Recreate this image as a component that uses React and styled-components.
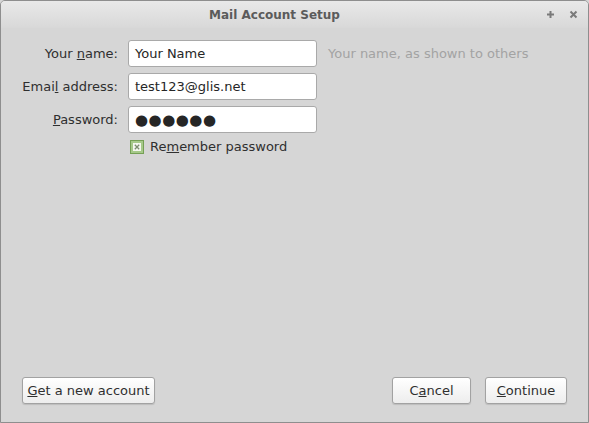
import React from 'react'
import styled, { createGlobalStyle } from 'styled-components'

const GlobalStyle = createGlobalStyle`
    html, body {
        margin: 0;
        padding: 0;
        background: #d6d6d6;
    }
    body {
        font-family: "DejaVu Sans", "Liberation Sans", sans-serif;
        font-size: 13px;
        color: #2f2f2f;
    }
`

const App = () => {
    return (
        <>
            <GlobalStyle />
            <Window>
                <TitleBar>
                    <Title>Mail Account Setup</Title>
                    <TitleButtons>
                        <svg width="9" height="9" viewBox="0 0 9 9">
                            <path d="M4.5 1v7M1 4.5h7" stroke="#7a7a7a" strokeWidth="2" />
                        </svg>
                        <svg width="9" height="9" viewBox="0 0 9 9">
                            <path d="M1.5 1.5l6 6M7.5 1.5l-6 6" stroke="#7a7a7a" strokeWidth="2" />
                        </svg>
                    </TitleButtons>
                </TitleBar>
                <Body>
                    <Form>
                        <Label>Your <u>n</u>ame:</Label>
                        <Input>Your Name</Input>
                        <Hint>Your name, as shown to others</Hint>

                        <Label>Emai<u>l</u> address:</Label>
                        <Input>test123@glis.net</Input>
                        <span />

                        <Label><u>P</u>assword:</Label>
                        <Input $password>●●●●●●</Input>
                        <span />

                        <span />
                        <CheckRow>
                            <svg width="14" height="14" viewBox="0 0 14 14">
                                <rect x="0.5" y="0.5" width="13" height="13" fill="#a6c98a" stroke="#75a055" />
                                <rect x="3" y="3" width="8" height="8" fill="#f4f7ef" />
                                <path d="M4.8 4.8l4.4 4.4M9.2 4.8l-4.4 4.4" stroke="#7c8c70" strokeWidth="1.3" />
                            </svg>
                            <span>Re<u>m</u>ember password</span>
                        </CheckRow>
                        <span />
                    </Form>
                    <Footer>
                        <Button $width={133}><u>G</u>et a new account</Button>
                        <Actions>
                            <Button $width={79}>C<u>a</u>ncel</Button>
                            <Button $width={82}><u>C</u>ontinue</Button>
                        </Actions>
                    </Footer>
                </Body>
            </Window>
        </>
    )
}

const Window = styled.div`
    box-sizing: border-box;
    width: 589px;
    height: 423px;
    display: flex;
    flex-direction: column;
    border: 1px solid #8e8e8e;
    border-radius: 5px 5px 0 0;
    background: #d6d6d6;
    overflow: hidden;
`
const TitleBar = styled.div`
    position: relative;
    height: 27px;
    flex: none;
    display: flex;
    align-items: center;
    justify-content: center;
    background: linear-gradient(#e9e9e9, #d8d8d8);
`
const Title = styled.div`
    font-weight: bold;
    font-size: 12px;
    color: #5b5b5b;
    margin-left: -40px;
`
const TitleButtons = styled.div`
    position: absolute;
    right: 10px;
    top: 9px;
    display: flex;
    gap: 14px;
`
const Body = styled.div`
    flex: 1;
    display: flex;
    flex-direction: column;
    padding: 12px 21px 18px 0;
`
const Form = styled.div`
    display: grid;
    grid-template-columns: 117px 189px auto;
    column-gap: 10px;
    row-gap: 6px;
    align-items: center;
`
const Label = styled.div`
    text-align: right;
    color: #2f2f2f;
`
const Input = styled.div`
    box-sizing: border-box;
    height: 27px;
    display: flex;
    align-items: center;
    padding: 0 6px;
    background: #fff;
    border: 1px solid #a9a9a9;
    border-radius: 3px;
    color: #262626;
    font-size: ${p => (p.$password ? '15px' : '13px')};
    letter-spacing: ${p => (p.$password ? '0.5px' : 'normal')};
`
const Hint = styled.div`
    margin-left: 1px;
    color: #a3a3a3;
`
const CheckRow = styled.div`
    display: flex;
    align-items: center;
    gap: 6px;
    margin-left: 2px;
`
const Footer = styled.div`
    margin-top: auto;
    padding-left: 21px;
    display: flex;
    justify-content: space-between;
`
const Actions = styled.div`
    display: flex;
    gap: 14px;
`
const Button = styled.div`
    box-sizing: border-box;
    width: ${p => p.$width}px;
    height: 27px;
    display: flex;
    align-items: center;
    justify-content: center;
    border: 1px solid #a2a2a2;
    border-radius: 3px;
    background: linear-gradient(#ffffff, #ededed);
    box-shadow: 0 1px 1px rgba(0, 0, 0, 0.12);
    color: #2f2f2f;
`

export default App
